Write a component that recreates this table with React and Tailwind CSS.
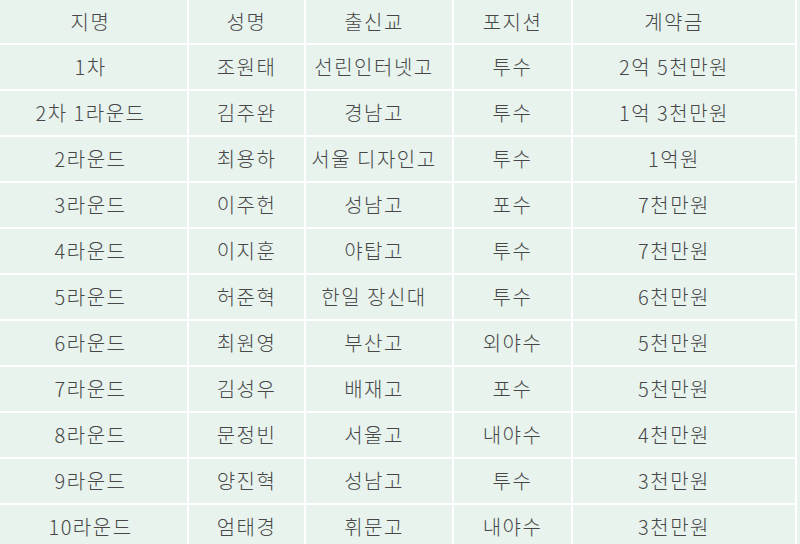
import React from "react";

const rows = [
  ["지명", "성명", "출신교", "포지션", "계약금"],
  ["1차", "조원태", "선린인터넷고", "투수", "2억 5천만원"],
  ["2차 1라운드", "김주완", "경남고", "투수", "1억 3천만원"],
  ["2라운드", "최용하", "서울 디자인고", "투수", "1억원"],
  ["3라운드", "이주헌", "성남고", "포수", "7천만원"],
  ["4라운드", "이지훈", "야탑고", "투수", "7천만원"],
  ["5라운드", "허준혁", "한일 장신대", "투수", "6천만원"],
  ["6라운드", "최원영", "부산고", "외야수", "5천만원"],
  ["7라운드", "김성우", "배재고", "포수", "5천만원"],
  ["8라운드", "문정빈", "서울고", "내야수", "4천만원"],
  ["9라운드", "양진혁", "성남고", "투수", "3천만원"],
  ["10라운드", "엄태경", "휘문고", "내야수", "3천만원"],
];

// small offsets so text sits where the original table put it
const colPad = ["pr-[6px]", "", "pr-[10px]", "", "pr-[20px]"];

export default function App() {
  return (
    <div className="w-[800px] h-[544px] overflow-hidden bg-[#e8f3ee]">
      <div
        className="w-[797px] grid grid-cols-[187px_115px_146px_117px_222px] gap-[2px] bg-white pr-[2px] text-[20px] font-light tracking-[1.5px] text-[#474747]"
        style={{ fontFamily: '"Noto Sans CJK KR", "Noto Sans", sans-serif' }}
      >
        {rows.map((row, i) =>
          row.map((cell, j) => (
            <div
              key={i + "-" + j}
              className={
                "bg-[#e8f3ee] flex items-center justify-center whitespace-nowrap " +
                colPad[j] +
                " " +
                (i === 0 ? "h-[43px]" : "h-[44px]")
              }
            >
              {cell}
            </div>
          ))
        )}
      </div>
    </div>
  );
}
